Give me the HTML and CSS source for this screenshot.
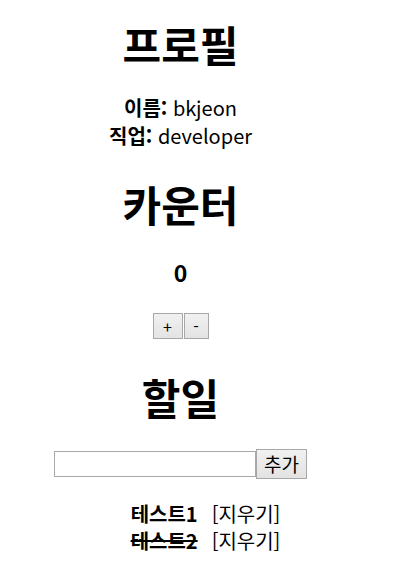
FILE: index.html
```html
<!DOCTYPE html>
<html lang="ko">
<head>
<meta charset="utf-8">
<title>App</title>
<link rel="stylesheet" href="styles.css">
</head>
<body>
<div class="app">
  <section class="profile">
    <h1 class="title">프로필</h1>
    <div class="info"><b>이름:</b> bkjeon</div>
    <div class="info"><b>직업:</b> developer</div>
  </section>
  <section class="counter">
    <h1 class="title">카운터</h1>
    <h3 class="count">0</h3>
    <div class="btns"><button class="btn btn-plus">+</button><button class="btn btn-minus">-</button></div>
  </section>
  <section class="todos">
    <h1 class="title">할일</h1>
    <form class="todo-form"><input class="todo-input" type="text"><button class="btn btn-add" type="button">추가</button></form>
    <ul class="todo-list">
      <li class="todo-item"><b class="todo-text">테스트1</b><span class="todo-del">[지우기]</span></li>
      <li class="todo-item"><b class="todo-text done">테스트2</b><span class="todo-del">[지우기]</span></li>
    </ul>
  </section>
</div>
</body>
</html>
```

FILE: styles.css
```css
html, body {
  margin: 0;
  padding: 0;
  background: #ffffff;
}
body {
  font-family: "Noto Sans CJK KR", "Noto Sans", sans-serif;
  color: #000000;
  font-size: 20px;
}
.app {
  width: 345px;
  margin: 0 8px;
  padding-top: 20px;
  text-align: center;
}
.title {
  font-size: 42px;
  line-height: 48px;
  font-weight: 700;
  margin: 0;
}
.info {
  line-height: 28px;
}
.profile .title {
  margin-bottom: 26px;
}
.counter .title {
  margin-top: 30px;
}
.count {
  font-size: 23px;
  line-height: 28px;
  font-weight: 700;
  margin: 30px 0 0;
}
.btns {
  display: flex;
  justify-content: center;
  gap: 1px;
  margin-top: 27px;
}
.btn {
  font-family: "Noto Sans CJK KR", "Noto Sans", sans-serif;
  background: linear-gradient(#f1f1f1, #e3e3e3);
  border: 1px solid #a8a8a8;
  border-radius: 0;
  color: #000;
  padding: 0;
  margin: 0;
  box-sizing: border-box;
}
.btn-plus {
  width: 30px;
  height: 26px;
  font-size: 16px;
  line-height: 22px;
}
.btn-minus {
  width: 25px;
  height: 26px;
  font-size: 16px;
  line-height: 22px;
}
.todos .title {
  margin-top: 34px;
}
.todo-form {
  display: flex;
  justify-content: center;
  align-items: center;
  margin: 28px 0 0;
}
.todo-input {
  width: 202px;
  height: 26px;
  box-sizing: border-box;
  border: 1px solid #a9a9a9;
  margin: 0;
  padding: 0 3px;
}
.btn-add {
  width: 51px;
  height: 30px;
  font-size: 19px;
  line-height: 26px;
}
.todo-list {
  list-style: none;
  margin: 21px 0 0;
  padding: 0 0 0 50px;
}
.todo-item {
  line-height: 27px;
  font-size: 20px;
}
.todo-text {
  font-weight: 700;
}
.done {
  text-decoration: line-through;
}
.todo-del {
  margin-left: 14px;
}
```
